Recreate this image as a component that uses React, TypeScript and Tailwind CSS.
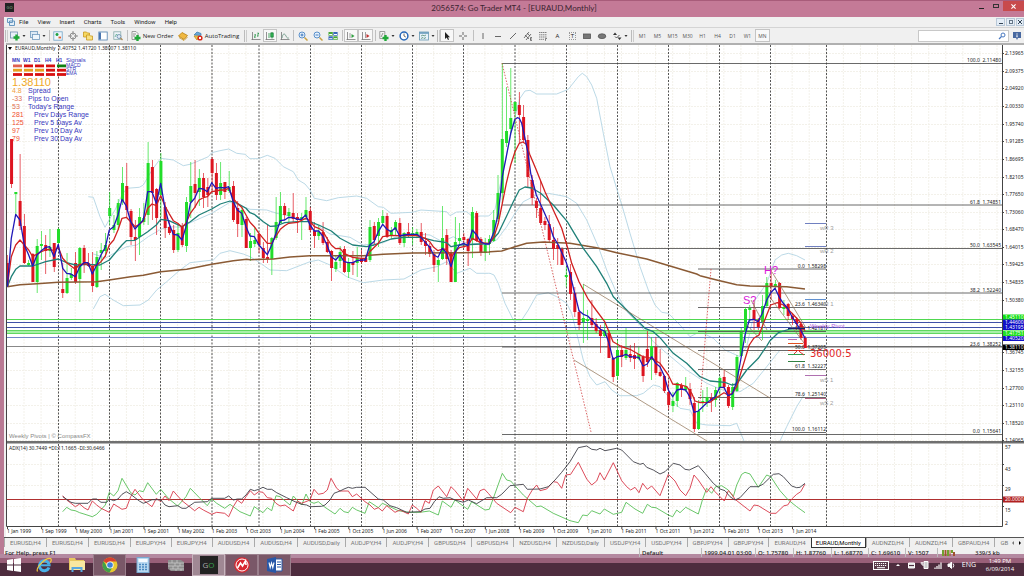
import React from "react";

type Pt = [number, number];

const BAR_STEP = 4.267;
const FIRST_BAR = 7.3;

/* Bars in time order: colour, high, low, body top, body bottom */
const BARS = `
r255,287,263,286 r139,188,139,184 g192,215,192,194 r154,230,201,226 r214,264,226,263 g260,266,263,265
r253,282,254,282 g239,293,246,282 g231,260,244,246 r235,274,245,251 g229,257,247,251 r243,272,243,267
g228,250,229,243 r263,298,289,293 g253,294,278,293 g268,280,274,278 r252,284,263,282 g247,302,248,279
r245,273,248,265 r253,267,263,266 r252,292,266,286 g251,288,257,287 g243,270,250,253 g233,257,245,251
g192,225,208,216 g215,233,225,230 g199,230,203,225 g167,205,183,201 r163,218,186,210 r209,245,211,237
r220,261,237,240 g208,255,217,237 g203,225,218,222 g142,225,163,215 r160,220,167,193 r188,235,189,218
g153,217,161,195 r202,238,207,228 r220,235,227,233 r225,253,230,250 g223,252,233,250 r223,247,227,245
g197,252,202,246 g162,218,186,202 r160,208,184,193 g169,206,178,192 r173,208,178,197 r178,207,187,195
r157,192,159,173 r163,200,173,195 g162,200,183,195 r182,199,182,192 g171,193,187,191 r181,222,186,220
r201,237,208,224 g207,237,210,225 r217,248,219,248 g233,261,241,248 g227,247,240,244 r233,253,234,245
r242,263,248,258 r225,263,257,259 g237,275,238,259 g197,240,222,238 g192,223,206,223 r203,220,206,215
g208,222,212,216 r193,222,213,219 r213,233,217,220 g213,240,217,219 g197,220,210,217 r207,232,211,230
r222,248,231,236 g225,240,232,236 r222,245,232,243 r237,253,242,252 r250,281,251,268 g255,272,262,269
g246,268,252,261 r246,273,249,272 g258,278,262,272 r251,275,262,265 g247,277,258,263 r250,264,259,262
r255,262,258,262 g220,262,227,260 r222,245,226,240 g218,247,222,236 g210,225,216,223 r213,238,216,237
g227,238,230,236 g220,235,222,230 r218,245,223,243 g232,247,233,243 r223,237,232,236 g227,245,233,235
g229,237,232,236 r223,245,232,242 r233,255,241,246 r243,257,246,254 r250,272,254,265 g258,282,260,265
g206,260,238,259 r229,265,235,259 r250,282,252,282 g217,282,242,282 g223,245,238,241 r233,248,237,240
r238,266,239,251 g207,258,212,240 r211,242,213,241 r237,256,239,252 g238,261,245,253 g235,255,239,244
g210,242,220,241 g175,222,193,219 g63,203,139,193 g87,147,131,143 g68,133,118,129 g102,163,102,111
r92,143,105,115 r105,142,117,140 r135,187,140,177 r175,205,180,198 r198,218,201,208 r181,225,208,223
r217,230,221,225 r215,242,224,240 r227,260,240,249 r238,265,245,249 r247,265,249,265 g267,287,275,277
r264,300,272,294 r287,317,293,312 r310,330,312,325 g284,343,318,322 g310,340,319,321 r300,328,318,325
r318,333,324,331 r325,353,330,336 g323,337,331,336 r330,358,333,358 r357,382,358,377 g340,380,350,376
r345,367,350,357 g328,360,350,358 r345,362,354,358 r343,369,355,359 g347,360,354,359 r355,382,357,376
r331,367,349,362 g337,380,346,360 r337,375,347,373 r349,377,372,376 r375,393,376,391 r380,410,392,405
g392,412,401,406 g382,407,383,401 r383,397,385,390 g377,392,386,390 r383,405,389,399 r397,432,403,429
g400,430,411,429 g390,412,401,403 g387,407,397,402 r393,412,398,400 g387,407,390,400 g376,397,378,388
r370,390,377,387 r385,408,387,406 g383,410,387,407 g355,392,357,391 g328,357,332,356 g307,343,309,332
g305,322,308,310 r300,330,310,320 r318,330,320,327 g295,340,306,322 g277,308,283,306 r270,300,283,287
g280,290,284,287 r282,309,283,308 g300,315,307,309 r303,320,304,316 r313,325,316,319 r317,330,319,324
r322,340,324,338 r336,348,338,348`
  .trim()
  .split(/\s+/)
  .map((s) => ({ up: s[0] === "g", v: s.slice(1).split(",").map(Number) }));

/* Series are stored at three units per pixel, each piece relative to its own origin. */
type Piece = [number, number, string];
const join = (pieces: Piece[]) =>
  pieces
    .flatMap(([ox, oy, s]) =>
      s.trim().split(/\s+/).map((p) => {
        const [x, y] = p.split(",").map(Number) as Pt;
        return `${(ox + x / 3).toFixed(1)},${(oy + y / 3).toFixed(1)}`;
      })
    )
    .join(" ");

const FAST = join([
  [0, 130, "22,470 34,325 47,253 60,270 73,345 86,375 98,408 111,375 124,362 137,352 149,350 162,380 175,343 188,415 200,430 213,432 226,440 239,410 252,398 264,398 277,432 290,405 303,375 316,352 328,300 341,290 354,255 366,208 379,228 392,275 405,297 418,283 430,270 443,185 456,185 469,220 482,160 495,235 507,280 520,313 533,315 546,330 558,290 571,220 584,205 597,175 610,177 622,185 635,158 648,175 661,172 674,174 686,170 700,215 712,240 725,250 738,290"],
  [250, 130, "0,318 13,320 27,345 40,360 52,374 65,345 78,310 91,272 104,270 116,262 129,263 142,268 154,268 167,255 180,285 193,303 206,303 218,318 231,345 244,380 257,390 270,375 282,395 295,398 308,398 321,392 334,390 346,390 359,345 372,335 385,305 398,283 410,297 423,305 436,293 449,318 462,315 475,313 487,313 500,313 513,322 526,337 539,352 551,375 564,382 577,355 590,370 603,410 615,368 628,345 641,340 654,347 667,300 680,315 692,335 705,342 718,342"],
  [490, 50, "0,575 12,545 25,490 37,380 49,320 62,250 75,208 82,203 88,205 95,220 105,265 113,305 122,370 139,435 155,470 177,520 190,560 205,585 228,635"],
  [540, 250, "91,75 104,130 117,182 130,193 143,198 155,210 168,225 181,238 194,243 207,280 219,328 232,320 245,318 258,313 270,320 296,322 309,348 322,342 335,320 347,340 360,350 373,378 385,420 398,440 411,420 424,417 437,420 449,440 462,487 475,483 501,458 526,440 539,412 552,412 564,437 577,432 590,395 602,330 615,255 628,210 641,208 654,215 667,190 680,150"],
  [700, 210, "212,248 225,235 238,262 250,280 263,295 276,320 289,340 302,360 315,385"],
]);
const SLOW = join([
  [0, 130, "22,470 34,380 47,345 60,330 73,345 86,360 98,380 111,372 124,365 137,360 149,358 162,362 175,352 188,385 200,398 213,408 226,418 239,403 252,402 264,402 277,410 290,405 303,395 316,378 328,345 341,330 354,300 366,265 379,262 392,275 405,290 418,283 430,273 443,235 456,222 469,227 482,197 495,228 507,250 520,272 533,280 546,292 558,280 571,250 584,232 597,210 610,203 622,200 635,185 648,183 661,180 674,180 686,175 700,205 712,220 725,232 738,255"],
  [250, 130, "0,277 13,290 27,310 52,340 65,340 78,318 91,298 104,287 116,280 142,277 167,265 180,272 193,290 206,295 218,303 231,325 244,345 257,356 270,355 282,370 308,382 334,385 346,385 359,365 385,340 398,320 423,316 449,317 500,317 526,325 539,335 551,352 564,362 577,357 590,358 603,383 615,365 628,353 654,347 667,325 692,338 718,340"],
  [490, 50, "0,577 12,560 25,520 37,460 49,400 62,345 75,305 88,280 98,276 108,282 120,315 139,360 165,425 190,480 215,535 232,590"],
  [540, 250, "95,40 117,95 143,145 168,180 194,215 207,245 219,275 245,290 270,298 309,320 335,325 360,340 385,375 398,402 424,405 440,410 455,430 465,453 480,458 510,457 526,445 552,428 564,435 577,430 590,410 602,370 628,285 641,265 657,255 680,195"],
  [700, 210, "212,285 232,278 250,285 276,310 300,335 315,362"],
]);
const TEAL = join([
  [0, 130, "22,470 34,440 47,418 60,408 98,408 137,395 175,387 200,398 226,405 264,403 300,405 328,390 366,345 379,332 405,331 443,305 469,285 482,268 507,272 546,290 571,275 597,255 635,237 661,222 690,213 712,220 738,235"],
  [250, 130, "0,248 13,253 40,275 60,289 78,288 104,278 142,275 180,275 206,285 244,303 270,325 308,345 350,350 372,345 423,327 462,322 513,322 551,332 590,338 603,350 628,345 692,342 718,341"],
  [490, 50, "0,577 25,550 49,500 70,455 88,420 105,411 125,414 152,430 190,465 232,515 280,595 320,650"],
  [540, 250, "200,100 220,140 245,165 315,235 340,245 360,263 400,310 440,340 480,380 510,393 555,397 575,405 590,402 620,360 655,325 680,288"],
  [700, 210, "210,392 235,368 270,357 315,354"],
]);
const BROWN = join([
  [0, 130, "22,470 60,464 111,461 175,457 290,455 328,450 392,440 430,436 482,425 560,418 635,403 700,392 740,388"],
  [250, 130, "0,389 70,387 120,381 180,377 340,377 400,373 487,369 640,368 718,366"],
  [490, 50, "0,605 35,603 75,590 110,580 160,576 240,580 320,593 380,608 470,627 540,648 620,672"],
  [700, 210, "0,197 50,210 110,224 150,228 260,230 315,237"],
]);
const BAND_TOP = join([
  [0, 130, "265,200 280,202 300,260 315,292 330,265 345,240 366,195 380,175 418,172 430,165 456,120 482,85 520,90 550,107 570,103 590,95 625,80 635,68 660,62 686,57 710,70 735,73"],
  [250, 130, "0,86 25,86 52,76 75,85 100,110 130,125 145,150 165,162 180,180 193,205 230,212 265,203 320,198 350,205 385,230 400,232 423,250 487,247 513,240 590,245 600,257 620,246 650,245 670,262 690,258 715,258"],
  [490, 50, "0,495 15,478 40,360 70,220 90,145 105,123 120,121 140,132 200,132 235,118 265,80 277,70 290,80 305,105 320,145 340,250 360,350 400,480 420,550"],
  [540, 250, "300,50 325,120 345,165 365,187 385,190 420,225 450,260 480,245 520,265 555,300 600,320 620,290 640,200"],
  [700, 210, "165,270 200,220 225,150 245,135 265,130 290,137 315,150"],
]);
const BAND_MID = join([
  [0, 130, "280,372 300,378 315,385 350,365 380,350 410,345 445,320 482,298 510,290 546,292 571,278 635,250 690,217 735,232"],
  [250, 130, "0,238 50,240 80,250 180,272 240,312 300,322 340,345 400,338 462,310 540,315 577,335 610,320 640,337 718,345"],
  [490, 50, "0,580 20,570 50,530 75,490 100,455 140,435 175,430 230,440 260,460 290,510 325,590"],
  [540, 250, "200,60 230,130 260,185 300,225 340,275 380,310 440,360 500,400 560,425 600,425 640,400 680,350 720,300"],
]);
const BAND_LOW = join([
  [0, 130, "280,537 300,500 315,493 340,510 370,527 420,525 445,510 470,480 500,455 540,420 570,398 640,390 660,370 690,362 730,372"],
  [250, 130, "0,380 25,395 60,420 110,422 180,395 205,390 240,405 290,440 340,458 400,450 462,447 513,420 560,410 590,395 620,430 660,415 680,430 715,430"],
  [490, 50, "0,670 12,675 25,700 45,760 70,810 95,810 115,780 140,735 165,730"],
  [540, 250, "25,128 50,140 80,160 95,190 110,250 130,330 150,380 170,405 195,395 215,420 240,437 290,437 310,430 340,405 360,410 390,445 420,475 450,480 470,520 500,525 570,527 590,520 612,573"],
]);
const BAND_LOW_END = join([[700, 210, "240,693 260,650 290,590 315,550"]]);

const ADX = join([
  [0, 425, "188,215 213,232 226,235 264,235 277,222 290,222 303,232 320,232 328,222 341,227 354,222 366,208 379,200 392,208 405,218 418,228 430,235 443,230 456,224 482,224 495,240 507,245 533,242 546,250 558,250 584,232 622,230 635,220 674,220 686,213 700,225 712,222 725,222 738,210 751,193 763,197 776,193 789,187 802,193 815,193 830,203 860,218 885,230 905,238 920,240 930,245 965,244 975,240 990,225 1002,205"],
  [340, 425, "0,198 12,192 25,187 37,190 50,187 75,187 90,200 115,222 130,225 150,242 170,248 185,255 200,262 240,260 255,252 270,250 283,230 297,215 310,220 330,218 345,225 370,232 385,225 410,236 440,218 470,218 485,208 510,182 530,180 550,178 562,193 600,192 625,185 645,165 665,142 690,110 715,68 740,63 755,73 770,75 780,70 795,77 830,70 845,75 860,90 880,110 900,118 910,115 920,127 940,135 960,147 975,140 1000,115"],
  [680, 425, "0,120 15,133 28,135 55,122 75,145 100,175 120,192 135,197 150,215 165,225 180,218 210,185 235,185 250,177 280,148 297,146 310,155 335,183 350,188 360,187 375,175"],
]);
const DI_MINUS = join([
  [0, 425, "188,212 200,225 213,235 226,245 239,237 252,248 264,255 277,228 290,240 303,250 328,262 341,237 366,253 379,250 392,215 405,193 418,210 430,225 456,245 469,220 482,230 495,213 507,227 520,198 533,213 546,227 571,247 584,257 597,247 610,255 635,268 650,262 674,265 686,275 700,245 712,225 725,235 738,215 751,197 763,210 776,200 789,202 802,218 815,220 828,235 840,243 855,240 880,258 892,228 905,235 930,225 942,193 955,208 970,205 982,195 993,160 1010,190"],
  [340, 425, "0,198 25,198 37,215 50,207 75,230 90,240 103,253 115,248 127,258 140,242 165,262 180,255 205,267 217,240 230,250 243,262 255,227 268,235 280,195 295,183 320,215 333,185 345,197 370,228 383,190 410,222 420,197 433,192 445,205 470,235 512,263 525,247 550,260 562,220 577,195 590,180 600,197 620,192 640,170 652,172 665,190 677,150 692,148 715,112 740,162 755,180 770,168 780,143 793,165 820,113 845,167 860,185 872,195 885,187 897,203 908,175 922,193 935,183 960,212 985,148 1005,168"],
  [680, 425, "0,195 17,212 30,190 42,150 55,165 80,202 93,185 105,200 120,215 133,228 145,197 155,207 165,223 210,258 222,240 235,242 272,265 288,265 312,242 323,240 335,222 350,208 362,200 375,177"],
]);
const DI_PLUS = join([
  [0, 425, "188,260 200,247 213,255 226,257 239,263 252,267 277,275 290,268 316,240 328,202 341,213 354,197 366,160 392,203 405,210 418,197 430,200 443,173 469,208 482,193 507,222 533,243 558,215 571,190 597,217 622,242 635,222 650,235 674,250 690,238 720,260 751,273 763,245 789,263 802,248 815,257 828,212 840,215 870,240 880,213 905,240 918,207 930,230 942,235 955,230 975,247 1005,267"],
  [340, 425, "0,250 12,260 25,263 37,247 50,255 75,265 88,230 115,248 127,235 150,245 175,257 205,262 240,262 268,258 295,270 307,228 333,247 345,225 383,253 395,230 435,255 448,253 460,220 487,145 500,165 512,168 550,210 590,245 603,243 640,265 690,287 715,293 728,270 742,272 755,257 780,267 793,252 820,268 845,262 858,232 885,252 908,265 922,238 935,247 948,248 985,270 998,275 1010,255"],
  [680, 425, "0,263 17,247 55,267 68,222 80,190 95,205 107,185 125,182 145,195 160,215 170,180 185,148 195,142 210,147 235,187 260,150 272,155 300,197 325,225 350,245 375,263"],
]);

const PRICES: [string, number][] = [
  ["2.13965", 53], ["2.09375", 71], ["2.04920", 88], ["2.00330", 106], ["1.95740", 124], ["1.91285", 141],
  ["1.86695", 159], ["1.82105", 177], ["1.77650", 194], ["1.73060", 212], ["1.68470", 229], ["1.64015", 247],
  ["1.59425", 264], ["1.54835", 282], ["1.50380", 300], ["1.36745", 352], ["1.32155", 370],
  ["1.27700", 388], ["1.23110", 405], ["1.18520", 423], ["1.14065", 440],
];
const TAGS: [string, number, string][] = [
  ["1.45110", 317, "#10e010"], ["1.44600", 322, "#1010c8"], ["1.43195", 327, "#1010c8"],
  ["1.40520", 338, "#1010c8"], ["1.41751", 333, "#20e020"], ["1.38110", 347, "#000"],
];
const DATES = "1 Jan 1999|1 Sep 1999|1 May 2000|1 Jan 2001|1 Sep 2001|1 May 2002|1 Feb 2003|1 Oct 2003|1 Jun 2004|1 Feb 2005|1 Oct 2005|1 Jun 2006|1 Feb 2007|1 Oct 2007|1 Jun 2008|1 Feb 2009|1 Oct 2009|1 Jun 2010|1 Feb 2011|1 Oct 2011|1 Jun 2012|1 Feb 2013|1 Oct 2013|1 Jun 2014".split("|");
const YEARS = [58.5, 109.5, 160.5, 212, 259, 310.5, 361.5, 412.5, 463.5, 515, 566.5, 617.5, 668.5, 719.5, 770.5, 826.5];
const FIB_MAJOR: [string, number][] = [
  ["100.0  2.11480", 63.5], ["61.8  1.74851", 205], ["50.0  1.63545", 248.5],
  ["38.2  1.52240", 293], ["23.6  1.38252", 347], ["0.0  1.15641", 434.5],
];
const FIB_MINOR: [string, number][] = [
  ["0.0  1.58298", 269], ["23.6  1.46340", 307.5], ["38.2  1.42181", 331.5], ["50.0  1.37205", 350.5],
  ["61.8  1.32227", 369.5], ["78.6  1.25140", 397.5], ["100.0  1.16112", 432.5],
];
const PIVOTS: [string, number, string][] = [
  ["wR 3", 223.5, "#7080c0"], ["wR 2", 246.5, "#7080c0"], ["wR 1", 299.5, "#6090d0"],
  ["wS 1", 375.5, "#b070b0"], ["wS 2", 398.5, "#b06080"],
];
const STATS: [string, string, number, string][] = [
  ["4.8", "Spread", 28, "#f0a040"], ["-33", "Pips to Open", 28, "#e07050"], ["53", "Today's Range", 28, "#e07050"],
  ["281", "Prev Days Range", 34, "#f05030"], ["125", "Prev 5 Days Av", 34, "#f05030"],
  ["97", "Prev 10 Day Av", 34, "#f05030"], ["79", "Prev 30 Day Av", 34, "#f05030"],
];
const SIGNALS = [
  ["#e06050", "#d81010", "#d81010", "#d81010", "#108010"],
  ["#e8a020", "#e8a020", "#e8a020", "#d81010", "#d81010"],
  ["#d81010", "#d81010", "#d81010", "#d81010", "#d81010"],
];

function Chart() {
  return (
    <svg viewBox="6 43 1018 494" className="block h-auto w-full bg-white font-['Noto_Sans',sans-serif]" role="img" aria-label="EURAUD monthly chart">
      <g stroke="#f3f1ea" strokeDasharray="2 1">
        {Array.from({ length: 58 }, (_, i) => <line key={i} x1={24 + i * 17.07} x2={24 + i * 17.07} y1="45" y2="526" />)}
        {PRICES.map(([p, y]) => <line key={p} x1="7" x2="1002" y1={y + 0.5} y2={y + 0.5} />)}
        {[464.5, 485.5, 506.5].map((y) => <line key={y} x1="7" x2="1002" y1={y} y2={y} />)}
      </g>

      <g stroke="#555" strokeDasharray="2 1.5" strokeWidth="1">
        {YEARS.map((x) => <line key={x} x1={x} x2={x} y1="45" y2="526" />)}
      </g>

      <g fill="none" stroke="#b3d5e3" strokeWidth="0.9">
        <polyline points={BAND_TOP} />
        <polyline points={BAND_MID} />
        <polyline points={BAND_LOW} />
        <polyline points={BAND_LOW_END} />
      </g>

      <rect x="7" y="330.5" width="995" height="3.5" fill="#a8f0a8" />
      <g strokeWidth="1">
        <line x1="7" x2="1002" y1="319.5" y2="319.5" stroke="#50d850" />
        <line x1="7" x2="1002" y1="322.5" y2="322.5" stroke="#4050a8" />
        <line x1="7" x2="1002" y1="327.5" y2="327.5" stroke="#4050a8" />
        <line x1="7" x2="1002" y1="330.5" y2="330.5" stroke="#60d860" />
        <line x1="7" x2="1002" y1="333.5" y2="333.5" stroke="#60d860" />
        <line x1="7" x2="1002" y1="337.5" y2="337.5" stroke="#7088c8" />
        <line x1="7" x2="1002" y1="346.5" y2="346.5" stroke="#888" />
      </g>

      <g stroke="#444" strokeWidth="0.8">
        {FIB_MAJOR.map(([t, y]) => <line key={t} x1="502" x2="1002" y1={y} y2={y} />)}
        {FIB_MINOR.map(([t, y]) => <line key={t} x1="698" x2="826" y1={y} y2={y} />)}
      </g>
      <g fill="#222" fontSize="5" textAnchor="end">
        {FIB_MAJOR.map(([t, y]) => <text key={t} xmlSpace="preserve" x="1001" y={y - 1.5}>{t}</text>)}
        {FIB_MINOR.map(([t, y]) => <text key={t} xmlSpace="preserve" x="826" y={y - 1.5}>{t}</text>)}
      </g>

      <g>
        {BARS.map(({ up, v: [h, l, t, b] }, i) => {
          const x = FIRST_BAR + i * BAR_STEP;
          const c = up ? "#22dd2a" : "#dd1420";
          return (
            <g key={i} fill={c}>
              <rect x={x - 0.4} y={h} width="0.8" height={l - h} opacity="0.85" />
              <rect x={x - 1.5} y={t} width="3" height={Math.max(b - t, 1.5)} />
            </g>
          );
        })}
      </g>

      <g fill="none" strokeWidth="1.3" strokeLinejoin="round">
        <polyline points={BROWN} stroke="#8a5a34" strokeWidth="1.5" />
        <polyline points={TEAL} stroke="#1f8078" />
        <polyline points={SLOW} stroke="#d02020" />
        <polyline points={FAST} stroke="#2018b8" />
      </g>

      <g fill="none" stroke="#8c6f50" strokeWidth="0.7">
        <line x1="583" y1="284" x2="770" y2="398" />
        <line x1="574" y1="360" x2="707" y2="441" />
        <line x1="751" y1="300" x2="767" y2="330" />
        <line x1="746" y1="324" x2="762" y2="341" />
        <line x1="772" y1="272" x2="806" y2="328" />
        <line x1="769" y1="296" x2="804" y2="343" />
      </g>
      <g fill="none" stroke="#d04040" strokeWidth="0.8" strokeDasharray="1.5 1.5">
        <line x1="502" y1="63" x2="591" y2="432" />
        <line x1="711" y1="269" x2="700" y2="402" />
      </g>

      <g strokeWidth="1">
        <line x1="788" x2="805" y1="328.5" y2="328.5" stroke="#202070" />
        <line x1="788" x2="797" y1="339.5" y2="339.5" stroke="#c070b0" />
        <line x1="788" x2="803" y1="343.5" y2="343.5" stroke="#e05020" />
        <line x1="788" x2="804" y1="350.5" y2="350.5" stroke="#c03020" />
        <line x1="788" x2="805" y1="354.5" y2="354.5" stroke="#30a050" />
        <line x1="788" x2="805" y1="361.5" y2="361.5" stroke="#308040" />
        <path d="M794 354l4-4 2 2 4 3" fill="none" stroke="#e03030" />
        {PIVOTS.map(([t, y, c]) => <line key={t} x1="805" x2="826" y1={y} y2={y} stroke={c} />)}
      </g>
      <g fontFamily="Liberation Sans, sans-serif">
        <g fill="#a0a0a0" fontSize="6">
          {PIVOTS.map(([t, y]) => <text key={t} x="820" y={y + 6}>{t}</text>)}
          <text x="9" y="438" fill="#888">Weekly Pivots | © CompassFX</text>
        </g>
        <text x="810" y="328" fontSize="6" fill="#b060e0">Weekly Pivot</text>
        <text x="764" y="274" fontSize="11" fill="#d818d8">H?</text>
        <text x="743" y="304" fontSize="11" fill="#d818d8">S?</text>
      </g>
      <text x="810" y="357" fontSize="10" fill="#e02828" fontFamily="DejaVu Sans, sans-serif">36000:5</text>

      <path d="M8 47h4l-2 3z" fill="#000" />
      <text x="15" y="50" fontSize="5" fill="#222">EURAUD,Monthly&#160; 1.40752 1.41720 1.38007 1.38110</text>
      <g fontFamily="Liberation Sans, sans-serif" fill="#3838c0">
        <g fontSize="5" fontWeight="bold">
          {["MN", "W1", "D1", "H4", "H1"].map((t, i) => <text key={t} x={12 + i * 11} y="62">{t}</text>)}
        </g>
        <text x="66" y="62" fontSize="6">Signals</text>
        {["MACD", "STR", "EMA"].map((t, i) => <text key={t} x="66" y={67 + i * 4} fontSize="5">{t}</text>)}
        {SIGNALS.map((row, r) => row.map((c, i) => <rect key={`${r}-${i}`} x={13 + i * 11} y={64.5 + r * 4.3} width="9" height="2.8" fill={c} />))}
        <text x="12" y="86" fontSize="11" fill="#f0a828">1.38110</text>
        {STATS.map(([n, label, x, c], i) => (
          <g key={label} fontSize="7">
            <text x="12" y={93 + i * 8} fill={c}>{n}</text>
            <text x={x} y={93 + i * 8}>{label}</text>
          </g>
        ))}
      </g>

      <rect x="6" y="441" width="1018" height="2.5" fill="#707070" />
      <text x="9" y="450" fontSize="5" fill="#222">ADX(14) 30.7449 +DI:11.1665 -DI:30.6466</text>
      <g fill="none" strokeWidth="0.9" strokeLinejoin="round">
        <line x1="7" x2="1002" y1="499.5" y2="499.5" stroke="#b03030" strokeWidth="1" />
        <polyline points={DI_PLUS} stroke="#58c058" />
        <polyline points={DI_MINUS} stroke="#d83848" />
        <polyline points={ADX} stroke="#404048" />
      </g>

      <path d="M1002.5 45V526.5H6.5V45" fill="none" stroke="#444" />
      <g stroke="#444">
        {PRICES.map(([p, y]) => <line key={p} x1="1002" x2="1004" y1={y + 0.5} y2={y + 0.5} />)}
        {[464.5, 485.5, 506.5].map((y) => <line key={y} x1="1002" x2="1004" y1={y} y2={y} />)}
        {DATES.map((d, i) => <line key={d} x1={7.5 + i * 34.13} x2={7.5 + i * 34.13} y1="526" y2="529" />)}
      </g>
      <g fontSize="5" fill="#222">
        {PRICES.map(([p, y]) => <text key={p} x="1005" y={y + 2}>{p}</text>)}
        {DATES.map((d, i) => <text key={d} x={7 + i * 34.13} y="533">{d}</text>)}
        {([["57", 447], ["43", 469], ["29", 489], ["15", 510], ["2", 523]] as [string, number][]).map(([t, y]) => <text key={t} x="1005" y={y + 2}>{t}</text>)}
      </g>
      {TAGS.map(([t, y, c]) => (
        <g key={t}>
          <rect x="1003" y={y - 2.5} width="21" height="5.5" fill={c} />
          <text x="1005" y={y + 2} fontSize="5" fill="#fff">{t}</text>
        </g>
      ))}
      <rect x="1003" y="496.5" width="21" height="6" fill="#b02020" />
      <text x="1005" y="501" fontSize="5" fill="#fff">20.0000</text>
      <rect x="6" y="43" width="1018" height="2" fill="#b0b0b0" />
    </svg>
  );
}

const Ico = ({ children }: { children: React.ReactNode }) => (
  <svg viewBox="0 0 10 10" className="size-[10px] shrink-0" fill="none" stroke="#777" strokeWidth="0.8">{children}</svg>
);
const plus = <path d="M6.5 4v6M3.5 7h6" stroke="#20a838" strokeWidth="2.4" />;
const axes = <path d="M1.5 1v8M.5 8.5h9" stroke="#777" />;

const ICONS: Record<string, React.ReactNode> = {
  newChart: <Ico><rect x="0.5" y="1" width="7" height="6" fill="#e8f0f8" stroke="#7090b0" /><path d="M6.5 3.5v6M3.5 6.5h6" stroke="#20a838" strokeWidth="2.4" /></Ico>,
  profiles: <Ico><rect x="0.5" y="0.5" width="7" height="6" fill="#dce9f5" stroke="#6f98bd" /><rect x="2.5" y="3.5" width="7" height="5" fill="#eef5fb" stroke="#6f98bd" /></Ico>,
  watch: <Ico><rect x="0.8" y="0.8" width="8.4" height="8.4" fill="#eef6fb" stroke="#70a4c8" /><path d="M2.500 3.500h3M4 2v3" stroke="#20a040" strokeWidth="1.600" /><path d="M5.500 6.500h2.500" stroke="#e06030" strokeWidth="1.800" /></Ico>,
  target: <Ico><circle cx="5" cy="5" r="3" /><path d="M5 0v4M5 6v4M0 5h4M6 5h4" /></Ico>,
  folder: <Ico><path d="M.5 1h3l1 1h2v4h-6z" fill="#f6d860" stroke="#c89820" /><path d="M3.5 4h3l1 1h2v4h-6z" fill="#f8e080" stroke="#c89820" /></Ico>,
  terminal: <Ico><rect x="0.8" y="1" width="8.4" height="8" fill="#fff" stroke="#5080b0" /><path d="M2 1.5v7" stroke="#3868a8" strokeWidth="1.8" /></Ico>,
  tester: <Ico><rect x="0.8" y="0.8" width="7" height="7.5" fill="#eef3f8" stroke="#8aa" /><path d="M2 6l1.5-3 1.5 2" stroke="#5a8" /><circle cx="6" cy="5.5" r="2" fill="#dde9f5" stroke="#68a" /><path d="M7.5 7l2 2" stroke="#a85" strokeWidth="1.3" /></Ico>,
  order: <Ico><path d="M1 .5h4l2 2v6H1z" fill="#f4f4f4" stroke="#888" /><path d="M2 3h3M2 5h2" />{plus}</Ico>,
  diamond: <Ico><path d="M.5 5L4 1.5l5.500 3L6 8.500z" fill="#f0b840" stroke="#b88010" /><path d="M1 6.500l5 3 3.500-3.500" stroke="#c89020" /></Ico>,
  auto: <Ico><path d="M1 4l3-3 4 1.500v2z" fill="#68a8d8" stroke="#4080b0" /><path d="M1 5h5l-2 4z" fill="#f0c850" stroke="#c09020" /><circle cx="7" cy="7" r="2.600" fill="#d82818" stroke="none" /><rect x="6" y="6" width="2" height="2" fill="#fff" stroke="none" /></Ico>,
  bars: <Ico>{axes}<path d="M4 3v4M3 6h1M4 4h1M7 1.500v4M6 5h1M7 2.500h1" stroke="#209040" /></Ico>,
  candles: <Ico>{axes}<path d="M4 2v5M7 1v6.500" stroke="#209040" /><rect x="5.800" y="2" width="2.400" height="4" fill="#30b850" stroke="#208040" /></Ico>,
  line: <Ico>{axes}<path d="M2 7c1-5 2.500-5 4-2s2 2 3 2" stroke="#60907c" strokeWidth="0.800" /></Ico>,
  zoomIn: <Ico><circle cx="4" cy="4" r="3" fill="#e6f2fc" stroke="#3878c0" /><path d="M2.500 4h3M4 2.500v3" stroke="#2060b0" /><path d="M6.500 6.500l3 3" stroke="#c8a040" strokeWidth="1.500" /></Ico>,
  zoomOut: <Ico><circle cx="4" cy="4" r="3" fill="#e6f2fc" stroke="#3878c0" /><path d="M2.500 4h3" stroke="#2060b0" /><path d="M6.500 6.500l3 3" stroke="#c8a040" strokeWidth="1.500" /></Ico>,
  tile: <Ico><g stroke="none"><rect x="0.500" y="1" width="4.300" height="3.700" fill="#48a838" /><rect x="5.300" y="1" width="4.300" height="3.700" fill="#3868b8" /><rect x="0.500" y="5.300" width="4.300" height="3.700" fill="#3868b8" /><rect x="5.300" y="5.300" width="4.300" height="3.700" fill="#48a838" /><path d="M1.200 3h3v1h-3zM6 3h3v1H6zM1.200 7.300h3v1h-3zM6 7.300h3v1H6z" fill="#fff" /></g></Ico>,
  scroll: <Ico>{axes}<path d="M4 2v5" stroke="#888" /><path d="M5.500 3l3 2-3 2z" fill="#30a040" stroke="none" /></Ico>,
  shift: <Ico>{axes}<path d="M4.500 1v6" stroke="#888" /><path d="M5.500 3l3 2-3 2z" fill="#c03030" stroke="none" /></Ico>,
  indicators: <Ico><path d="M.800.500h5v7h-5z" fill="#f4f4f4" stroke="#888" /><path d="M2 6l2-4" />{plus}</Ico>,
  clock: <Ico><circle cx="5" cy="5" r="3.900" fill="#fff" stroke="#2868b8" strokeWidth="1.500" /><path d="M5 2.500V5l1.800 1" stroke="#444" /></Ico>,
  template: <Ico><rect x="0.500" y="1" width="9" height="8" fill="#e6f1fa" stroke="#6898b4" /><path d="M.500 2h9" stroke="#5890b4" strokeWidth="1.400" /><path d="M2 5l2-1 1 1 2-1M2 7.500l2-1 1 1 2-1" stroke="#408060" strokeWidth="0.700" /></Ico>,
  cursor: <Ico><path d="M3 1v7l1.700-1.500L6 9l1-.500L6 6.200h2z" fill="#222" stroke="none" /></Ico>,
  cross: <Ico><path d="M5 1v3M5 6v3M1 5h3M6 5h3" stroke="#444" /></Ico>,
  vline: <Ico><path d="M5 2v6" stroke="#444" /></Ico>,
  hline: <Ico><path d="M2 5.500h6" stroke="#444" /></Ico>,
  trend: <Ico><path d="M2 8l6-6" stroke="#444" /></Ico>,
  channel: <Ico><path d="M1 7l5-6M3 9l5-6M2 4l4 4M4 2l3 3" stroke="#555" strokeWidth="0.800" /><path d="M9 6.500H7.500v3H9M7.500 8H9" stroke="#333" strokeWidth="0.600" /></Ico>,
  fibo: <Ico><path d="M1 1.500h8M1 3.800h8M1 6h8M1 8.300h5" stroke="#666" strokeWidth="0.800" strokeDasharray="1.500 .500" /><path d="M9 7.500H7.500v2.300" stroke="#333" strokeWidth="0.600" /></Ico>,
  rect: <Ico><rect x="1.500" y="3" width="7" height="4.500" fill="#777" stroke="#555" /></Ico>,
  ellipse: <Ico><ellipse cx="5" cy="5.200" rx="3.800" ry="2.400" fill="#777" stroke="#555" /></Ico>,
  arrows: <Ico><path d="M1 4l2-2.500L5 4zM5.500 6.500h4L7.500 9z" fill="#333" stroke="none" /><path d="M3 5.500l1.500 1.500 3-3" stroke="#333" /></Ico>,
};

const Caret = () => <svg viewBox="0 0 4 4" className="size-[4px]"><path d="M.500 1h3L2 3z" fill="#333" /></svg>;

function Tool({ icon, label, w, menu, on, text }: { icon?: string; label: string; w: string; menu?: boolean; on?: boolean; text?: string }) {
  return (
    <button type="button" aria-label={label} className={`flex h-[13px] shrink-0 items-center justify-center gap-[2px] ${w} ${on ? "border border-[#c4c4c4] bg-[#f8f8f8]" : ""}`}>
      {icon && ICONS[icon]}
      {text && <span className="whitespace-nowrap">{text}</span>}
      {menu && <Caret />}
    </button>
  );
}
const Sep = ({ w }: { w: string }) => <span className={`flex h-[11px] shrink-0 justify-center ${w}`}><i className="w-px bg-[#c0c0c0]" /></span>;
const Grip = ({ w }: { w: string }) => <span className={`flex h-[12px] shrink-0 justify-center gap-px ${w}`}><i className="w-px bg-[#bbb]" /><i className="w-px bg-[#ccc]" /></span>;

function Toolbar() {
  return (
    <div className="flex h-[16px] items-center overflow-hidden border-t border-[#d4d4d4] bg-[#f0f0f0] pl-px font-['Open_Sans',sans-serif] text-[6px] font-medium leading-[8px] text-[#222]">
      <Grip w="w-[3px]" />
      <Tool icon="newChart" label="New chart" w="w-[20px]" menu />
      <Tool icon="profiles" label="Profiles" w="w-[20px]" menu />
      <Sep w="w-[3px]" />
      <Tool icon="watch" label="Market watch" w="w-[14px]" />
      <Tool icon="target" label="Data window" w="w-[15px]" />
      <Tool icon="folder" label="Navigator" w="w-[15px]" />
      <Tool icon="terminal" label="Terminal" w="w-[15px]" />
      <Tool icon="tester" label="Strategy tester" w="w-[15px]" />
      <Sep w="w-[4px]" />
      <Tool icon="order" label="New Order" w="w-[46px]" text="New Order" />
      <Tool icon="diamond" label="MetaEditor" w="w-[15px]" />
      <Tool icon="auto" label="AutoTrading" w="w-[52px]" text="AutoTrading" />
      <Grip w="w-[6px]" />
      <Tool icon="bars" label="Bar chart" w="w-[15px]" />
      <Tool icon="candles" label="Candlesticks" w="w-[14px]" on />
      <Tool icon="line" label="Line chart" w="w-[15px]" />
      <Sep w="w-[3px]" />
      <Tool icon="zoomIn" label="Zoom in" w="w-[15px]" />
      <Tool icon="zoomOut" label="Zoom out" w="w-[16px]" />
      <Tool icon="tile" label="Tile windows" w="w-[14px]" />
      <Sep w="w-[4px]" />
      <Tool icon="scroll" label="Auto scroll" w="w-[14px]" on />
      <Tool icon="shift" label="Chart shift" w="w-[15px]" on />
      <Sep w="w-[4px]" />
      <Tool icon="indicators" label="Indicators" w="w-[20px]" menu />
      <Tool icon="clock" label="Periods" w="w-[20px]" menu />
      <Tool icon="template" label="Templates" w="w-[19px]" menu />
      <Grip w="w-[4px]" />
      <Tool icon="cursor" label="Cursor" w="w-[14px]" on />
      <Tool icon="cross" label="Crosshair" w="w-[18px]" />
      <Sep w="w-[3px]" />
      <Tool icon="vline" label="Vertical line" w="w-[15px]" />
      <Tool icon="hline" label="Horizontal line" w="w-[15px]" />
      <Tool icon="trend" label="Trendline" w="w-[15px]" />
      <Tool icon="channel" label="Equidistant channel" w="w-[15px]" />
      <Tool icon="fibo" label="Fibonacci retracement" w="w-[15px]" />
      <Tool label="Text" w="w-[15px]" text="A" />
      <button type="button" aria-label="Text label" className="flex w-[15px] shrink-0 justify-center"><span className="border border-dotted border-[#999] px-px leading-[6px]">T</span></button>
      <Tool icon="rect" label="Rectangle" w="w-[14px]" />
      <Tool icon="ellipse" label="Ellipse" w="w-[16px]" />
      <Tool icon="arrows" label="Arrows" w="w-[20px]" menu />
      <Grip w="w-[5px]" />
      <span className="flex text-[5px] text-[#555]">
        {["M1", "M5", "M15", "M30", "H1", "H4", "D1", "W1", "MN"].map((t) => <Tool key={t} label={t} text={t} w="w-[15px]" on={t === "MN"} />)}
      </span>
      <label className="ml-auto flex h-[12px] w-[91px] shrink-0 items-center border border-[#c8c8c8] bg-white pr-[2px]">
        <input type="search" aria-label="Search" className="h-[8px] min-w-0 flex-1 bg-transparent outline-none" />
        <svg viewBox="0 0 8 8" className="size-[8px]"><circle cx="5" cy="3" r="2" fill="#fff" stroke="#4878c0" /><path d="M3.500 4.500L1 7" stroke="#4878c0" strokeWidth="1.300" /></svg>
      </label>
      <button type="button" aria-label="Messages" className="flex w-[15px] shrink-0 justify-center">
        <svg viewBox="0 0 10 10" className="size-[10px]"><path d="M1 1h8v6H6L5 9 4 7H1z" fill="#4868a0" /><path d="M5 2.500v1M5 4.200v2" stroke="#fff" strokeWidth="1.200" /></svg>
      </button>
    </div>
  );
}

const TABS = "EURUSD,H4|EURUSD,H4|EURUSD,H4|EURJPY,H4|EURJPY,H4|AUDUSD,H4|AUDUSD,H4|AUDUSD,Daily|AUDJPY,H4|AUDJPY,H4|GBPUSD,H4|GBPUSD,H4|NZDUSD,H4|NZDUSD,Daily|USDJPY,H4|USDJPY,H4|GBPJPY,H4|GBPJPY,H4|EURAUD,H4|EURAUD,Monthly|AUDNZD,H4|AUDNZD,H4|GBPAUD,H4|GB".split("|");

function TabStrip() {
  return (
    <div className="flex h-[11px] border-t border-[#555] bg-[#f0f0f0] font-['Roboto',sans-serif] text-[6px] leading-[9px] text-[#777]">
      <div className="flex min-w-0 flex-1 overflow-hidden">
        {TABS.map((t, i) =>
          t === "EURAUD,Monthly" ? (
            <button type="button" key={i} className="h-[10px] shrink-0 border-x border-b border-[#333] bg-white px-[4px] text-black">{t}</button>
          ) : (
            <button type="button" key={i} className="h-[9px] shrink-0 border-l border-[#aaa] pl-[5px] pr-[5px] last:pr-0">{t}</button>
          )
        )}
      </div>
      <button type="button" aria-label="Previous tabs" className="flex w-[6px] items-center justify-center"><svg viewBox="0 0 4 4" className="size-[4px]"><path d="M3 0v4L1 2z" fill="#777" /></svg></button>
      <button type="button" aria-label="Next tabs" className="flex w-[8px] items-center justify-center"><svg viewBox="0 0 4 4" className="size-[4px]"><path d="M1 0v4l2-2z" fill="#000" /></svg></button>
    </div>
  );
}

function StatusBar() {
  return (
    <div className="relative z-10 flex h-[6px] bg-[#f0f0f0] font-['Noto_Sans',sans-serif] text-[6px] font-medium leading-[11px] text-[#222]">
      <span className="flex-1 whitespace-nowrap pl-px">For Help, press F1</span>
      <div className="flex h-[9px] shrink-0 whitespace-nowrap">
        <span className="w-[62px] border-l border-[#bbb] pl-[2px]">Default</span>
        <span className="w-[54px] border-l border-[#bbb] pl-[2px]">1999.04.01 03:00</span>
        <span className="w-[38px] border-l border-[#bbb] pl-[2px]">O: 1.75780</span>
        <span className="w-[38px] border-l border-[#bbb] pl-[2px]">H: 1.87760</span>
        <span className="w-[37px] border-l border-[#bbb] pl-[2px]">L: 1.68770</span>
        <span className="w-[37px] border-l border-[#bbb] pl-[2px]">C: 1.69610</span>
        <span className="w-[32px] border-l border-[#bbb] pl-[2px]">V: 1507</span>
        <span className="w-[38px] border-l border-[#bbb] pl-[4px] pt-[2px]">
          <svg viewBox="0 0 13 6" className="h-[6px] w-[13px]"><path d="M0 0h2v6H0zM5 0h2v6H5zM9 0h2v3H9z" fill="#70a030" /><path d="M2.500 0h2v6h-2zM7.500 0h1v6h-1zM11 2h2v4h-2z" fill="#a05030" /></svg>
        </span>
        <span className="w-[49px]">339/3 kb</span>
      </div>
    </div>
  );
}

const APPS: { name: string; open?: boolean; art: React.ReactNode }[] = [
  { name: "Internet Explorer", art: <><path d="M13 10.500A5 5 0 1 1 13.200 7.500" fill="none" stroke="#48b0e8" strokeWidth="3" /><path d="M4 8.300h10.600" stroke="#48b0e8" strokeWidth="2" /><path d="M1.500 14.500C-.500 11 9 .500 14.500 1.500c1.500 1 .500 3-.500 4" fill="none" stroke="#f0c840" strokeWidth="1.200" /></> },
  { name: "File Explorer", art: <><path d="M0 1h6l1 2h8v10H0z" fill="#e8c860" /><path d="M1 4h15v9H1z" fill="#f8e8a0" /><path d="M3.500 15v-4h9v4" fill="none" stroke="#58a8e0" strokeWidth="2" /></> },
  { name: "Chrome", open: true, art: <><circle cx="8" cy="8" r="7.500" fill="#e8c830" /><path d="M8 8L1.500 4.200A7.500 7.500 0 0 1 14.500 4.500L8 4.500z" fill="#d84030" /><path d="M1.500 4.200A7.500 7.500 0 0 0 7.500 15.500L10.500 10 5 9.500z" fill="#40a048" /><circle cx="8" cy="8" r="3.600" fill="#fff" /><circle cx="8" cy="8" r="2.800" fill="#4080d8" /></> },
  { name: "Calculator", art: <><rect x="2" y="0.500" width="12" height="15" fill="#b8d8f0" stroke="#78a8d0" /><rect x="3.500" y="2" width="9" height="3" fill="#f4faff" /><path d="M4 7.500h8M4 10h8M4 12.500h8" stroke="#4888c0" strokeWidth="1.600" strokeDasharray="2 1" /></> },
  { name: "Firewall", art: <><path d="M0 3l13 0 3 2v9H3L0 12z" fill="#8d8d8d" /><path d="M0 6h16M0 9h16M2 12h14M4 3v3M9 3v3M7 6v3M12 6v3M5 9v3M10 9v3M8 12v2M13 12v2" stroke="#c8c8c8" strokeWidth="0.800" /></> },
];

const taskOpen = "border border-[#9a7f8c] bg-[#7a5868]";

function Taskbar() {
  return (
    <footer className="relative flex h-[22px] items-end bg-[#4e2c3e] font-['Open_Sans',sans-serif] text-white">
      <div className="absolute inset-x-0 top-0 h-[4px] bg-[#b489a0]" />
      <div className="absolute inset-x-0 top-[4px] h-[5px] bg-[#985f78]" />
      <nav className="relative z-20 flex h-full items-center">
        <button type="button" aria-label="Start" className="flex w-[27px] justify-center">
          <svg viewBox="0 0 14 14" className="size-[14px]"><path d="M0 2l6-.900v5.400H0zM7 1l7-1v6.500H7zM0 7.500h6v5.400L0 12zM7 7.500h7V14l-7-1z" fill="#fff" /></svg>
        </button>
        {APPS.map((a) => (
          <button type="button" key={a.name} aria-label={a.name} className={`flex h-[22px] w-[33px] items-center justify-center ${a.open ? taskOpen : ""}`}>
            <svg viewBox="0 0 16 16" className="size-[16px]">{a.art}</svg>
          </button>
        ))}
        <button type="button" className="flex h-[22px] w-[33px] items-center justify-center border border-[#c8b4be] bg-[#a08894]">
          <span className="flex size-[18px] items-center justify-center bg-[#222] text-[8px] leading-[10px] text-[#a8a8a8]">G<span className="text-[#38a050]">O</span></span>
        </button>
        <button type="button" aria-label="Trading client" className={`flex h-[22px] w-[33px] items-center justify-center ${taskOpen}`}>
          <svg viewBox="0 0 16 16" className="size-[16px]"><circle cx="8" cy="8" r="7.800" fill="#d82830" /><circle cx="8" cy="8" r="6" fill="none" stroke="#fff" strokeWidth="1" /><path d="M3.500 11L6.500 6l2 3 3-5 .500 4" fill="none" stroke="#fff" strokeWidth="1.600" /></svg>
        </button>
        <button type="button" aria-label="Word" className={`flex h-[22px] w-[33px] items-center justify-center ${taskOpen}`}>
          <svg viewBox="0 0 16 16" className="size-[16px]"><path d="M8 2h7v12H8z" fill="#fff" stroke="#2858a8" /><path d="M10 5h4M10 7.500h4M10 10h4" stroke="#2858a8" /><path d="M0 2l9-2v16l-9-2z" fill="#2858a8" /><path d="M2 5.500l1.200 5 1.300-4.500 1.300 4.500L7 5.500" fill="none" stroke="#fff" strokeWidth="1.100" /></svg>
        </button>
      </nav>
      <div className="relative z-20 ml-auto flex h-full items-center pr-[8px] text-[6px] leading-[8px]">
        <button type="button" aria-label="Touch keyboard" className="mr-[7px]">
          <svg viewBox="0 0 16 9" className="h-[9px] w-[16px]"><rect x="0.500" y="0.500" width="15" height="8" fill="#5a3a4a" stroke="#fff" /><path d="M2 2.500h12M2 4.500h12" stroke="#fff" strokeDasharray="1.200 .800" /><path d="M4 6.700h8" stroke="#fff" /></svg>
        </button>
        <button type="button" aria-label="Show hidden icons" className="mr-[8px]"><svg viewBox="0 0 4 4" className="size-[4px]"><path d="M0 3h4L2 1z" fill="#fff" /></svg></button>
        <svg viewBox="0 0 50 10" className="mr-[4px] h-[10px] w-[50px]" fill="none" stroke="#fff">
          <path d="M.500 3h6v5h-6z" fill="#ddd" /><path d="M1 5.500h5" stroke="#4e2c3e" />
          <path d="M16 1.500h4v7h-4z" fill="#ccc" /><path d="M14 2v3h2M12.500 3h3" />
          <path d="M27 9V7.500M29 9V6M31 9V4.500M33 9V2.500" strokeWidth="1.200" />
          <path d="M40 4h1.500l2-2v6.500l-2-2H40z" fill="#fff" /><path d="M45 3.500q1.500 2 0 4" />
        </svg>
        <span className="mr-[8px] text-[7px]">ENG</span>
        <time className="flex w-[32px] flex-col text-center"><span>1:49 PM</span><span>6/09/2014</span></time>
      </div>
    </footer>
  );
}

export default function App() {
  return (
    <div className="flex min-h-screen flex-col bg-[#f0f0f0]">
      <header className="flex h-[17px] items-start border-t border-[#a85c7a] bg-[#c47a97]">
        <div className="flex w-[54px] items-center pl-[5px] pt-[2px]">
          <span className="flex size-[9px] items-center justify-center bg-[#222] text-[4px] leading-[5px] text-[#8a8]">GO</span>
        </div>
        <h1 className="flex-1 text-center font-['Lato',sans-serif] text-[8px] leading-[15px] text-[#3a2430]">2056574: Go Trader MT4 - [EURAUD,Monthly]</h1>
        <div className="flex h-[10px]">
          <button type="button" aria-label="Minimize" className="flex w-[14px] items-center justify-center"><i className="mt-[4px] h-px w-[5px] bg-[#222]" /></button>
          <button type="button" aria-label="Maximize" className="flex w-[15px] items-center justify-center"><i className="h-[4px] w-[6px] border border-[#333]" /></button>
          <button type="button" aria-label="Close" className="flex w-[21px] items-center justify-center bg-[#c84a4c] pr-px">
            <svg viewBox="0 0 6 6" className="size-[5px]"><path d="M.500.500l5 5M5.500.500l-5 5" stroke="#fff" strokeWidth="1.300" /></svg>
          </button>
        </div>
      </header>
      <div className="flex bg-[#b97a94] pl-[4px]">
        <main className="min-w-0 flex-1 bg-[#f0f0f0]">
          <nav className="flex h-[10px] items-center gap-[9px] pl-[3px] font-['Roboto',sans-serif] text-[6px] leading-[10px] text-[#222]">
            <svg viewBox="0 0 8 8" className="-mr-[5px] size-[8px]"><path d="M.500.500h5v4h-5zM2.500 3h5v4.500h-5z" fill="#e4eff8" stroke="#6898c0" /></svg>
            {["File", "View", "Insert", "Charts", "Tools", "Window", "Help"].map((m) => <button type="button" key={m}>{m}</button>)}
            <span className="ml-auto flex gap-px text-[#345]">
              <button type="button" aria-label="Minimize chart" className="flex h-[8px] w-[9px] items-end justify-center border border-[#b8c8d8] bg-[#e4edf6] pb-px"><i className="h-px w-[4px] bg-[#345]" /></button>
              <button type="button" aria-label="Restore chart" className="flex h-[8px] w-[9px] items-center justify-center border border-[#b8c8d8] bg-[#e4edf6]"><i className="h-[4px] w-[4px] border border-[#678]" /></button>
              <button type="button" aria-label="Close chart" className="flex h-[8px] w-[8px] items-center justify-center border border-[#b8c8d8] bg-[#e4edf6]"><svg viewBox="0 0 4 4" className="size-[4px]"><path d="M0 0l4 4M4 0L0 4" stroke="#345" /></svg></button>
            </span>
          </nav>
          <Toolbar />
          <div className="pl-[2px]"><Chart /></div>
          <TabStrip />
          <StatusBar />
        </main>
      </div>
      <Taskbar />
    </div>
  );
}
